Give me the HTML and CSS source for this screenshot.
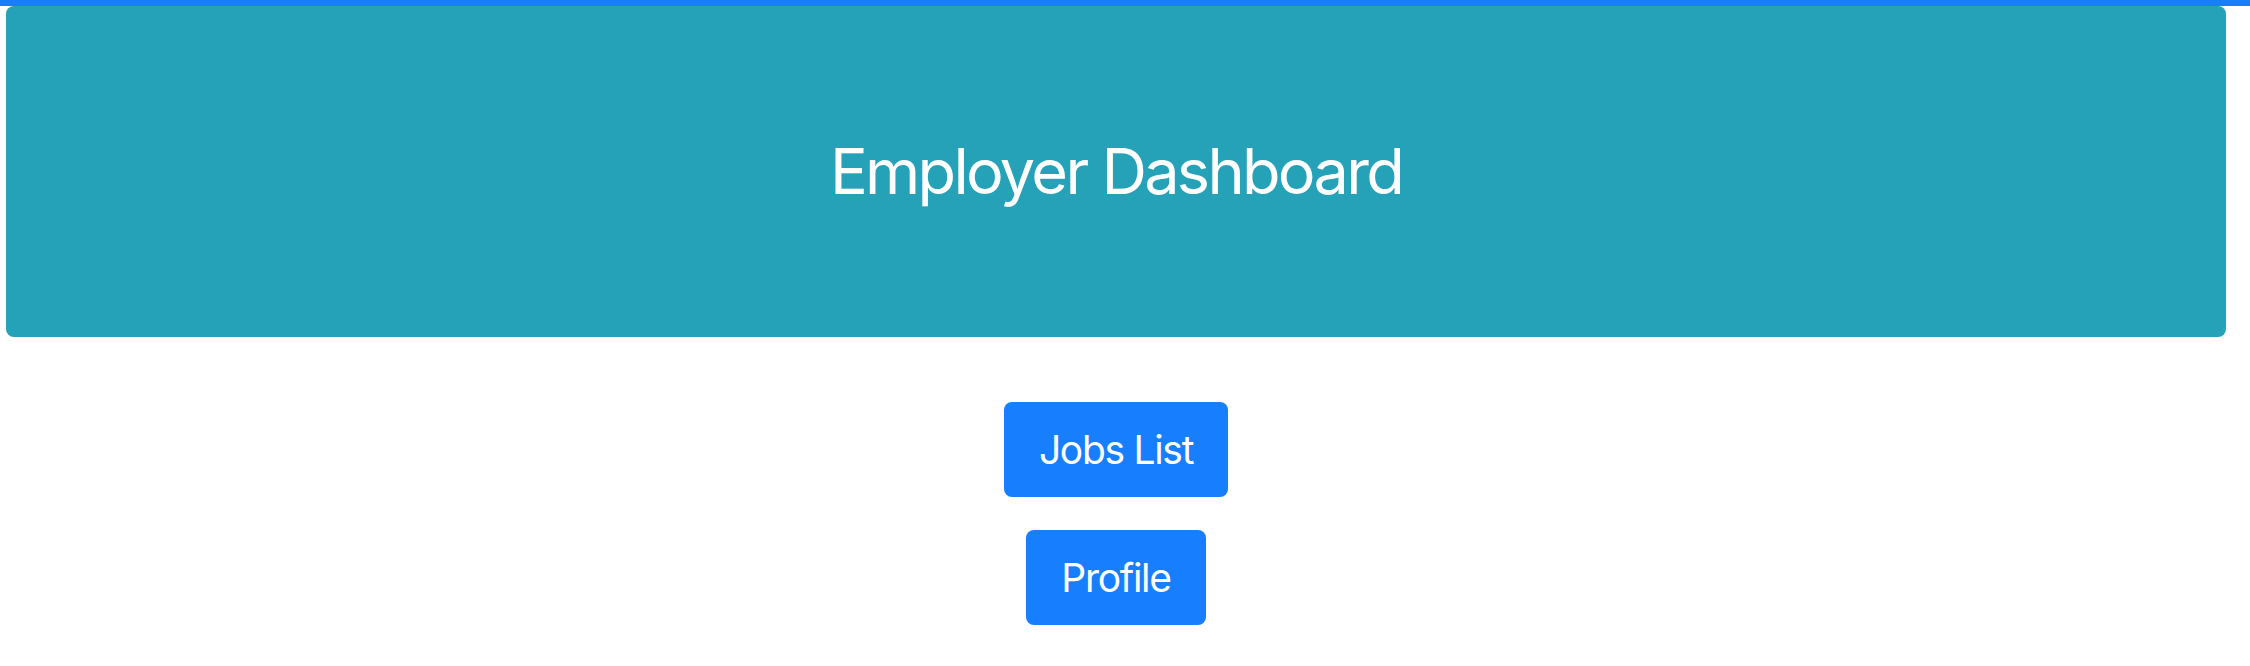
FILE: index.html
```html
<!DOCTYPE html>
<html lang="en">
<head>
<meta charset="utf-8">
<title>Employer Dashboard</title>
<link rel="stylesheet" href="styles.css">
</head>
<body>
<div class="topbar"></div>
<main class="page">
  <header class="hero">
    <h1 class="hero-title">Employer Dashboard</h1>
  </header>
  <nav class="actions">
    <a class="btn" href="#">Jobs List</a>
    <a class="btn" href="#">Profile</a>
  </nav>
</main>
</body>
</html>
```

FILE: styles.css
```css
html, body {
  margin: 0;
  padding: 0;
  background: #ffffff;
  font-family: Inter, "Noto Sans", "Liberation Sans", sans-serif;
}
.topbar {
  height: 6px;
  background: #177ffe;
}
.page {
  padding: 0 24px 0 6px;
}
.hero {
  height: 331px;
  background: #25a2b8;
  border-radius: 8px;
  display: flex;
  align-items: center;
  justify-content: center;
}
.hero-title {
  margin: 0;
  color: #ffffff;
  font-weight: 400;
  font-size: 63px;
  line-height: 1;
  letter-spacing: -2.7px;
}
.actions {
  display: flex;
  flex-direction: column;
  align-items: center;
  gap: 33px;
  margin-top: 65px;
}
.btn {
  display: flex;
  align-items: center;
  justify-content: center;
  height: 95px;
  padding: 0 35px;
  background: #177ffe;
  color: #ffffff;
  border-radius: 8px;
  text-decoration: none;
  font-size: 39px;
  letter-spacing: -1.3px;
  box-sizing: border-box;
}
```
